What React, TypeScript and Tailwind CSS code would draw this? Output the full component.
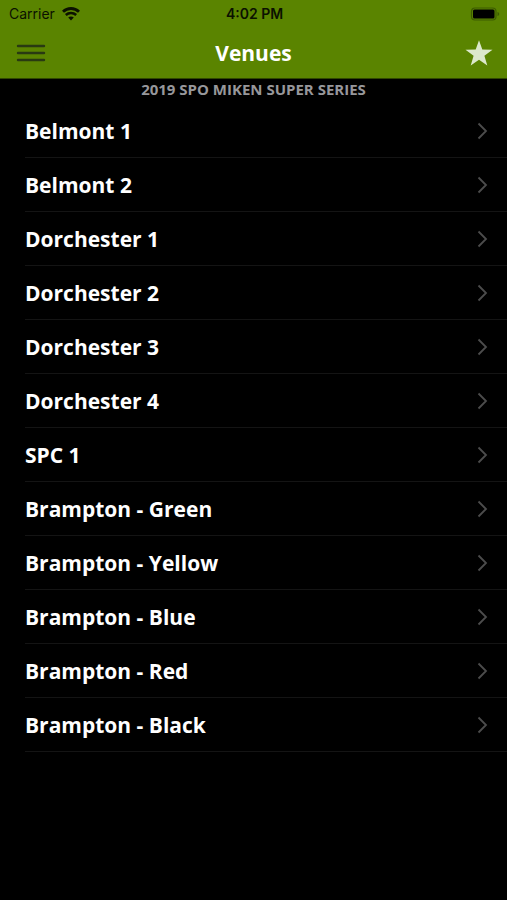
const venues = [
  'Belmont 1',
  'Belmont 2',
  'Dorchester 1',
  'Dorchester 2',
  'Dorchester 3',
  'Dorchester 4',
  'SPC 1',
  'Brampton - Green',
  'Brampton - Yellow',
  'Brampton - Blue',
  'Brampton - Red',
  'Brampton - Black',
]

function WifiIcon() {
  return (
    <svg viewBox="0 0 18 14" className="w-[18px] h-3.5" fill="none" aria-hidden="true">
      <path d="M1 4.800C5.500.4 12.500.4 17 4.800" stroke="#0b1100" strokeWidth="2.800" />
      <path d="M3.800 8c3-2.800 7.400-2.800 10.400 0" stroke="#0b1100" strokeWidth="2.500" />
      <path d="M6.200 10.600c1.600-1.500 4-1.500 5.600 0L9 13.600z" fill="#0b1100" />
    </svg>
  )
}

function BatteryIcon() {
  return (
    <svg viewBox="0 0 30 14" className="w-[30px] h-3.5" aria-hidden="true">
      <rect x="1.500" y="1" width="24.500" height="12" rx="3.500" fill="none" stroke="#3d5c00" strokeWidth="1.200" />
      <rect x="3" y="2.500" width="21.500" height="9" rx="1.500" fill="#000" />
      <path d="M27.500 5v4c1-.3 1.700-1.100 1.700-2s-.7-1.700-1.700-2z" fill="#3d5c00" />
    </svg>
  )
}

function StatusBar() {
  return (
    <div className="h-7 pl-[9px] pr-[7px] grid grid-cols-[1fr_auto_1fr] items-center text-[#0b1100] font-['Inter','Liberation_Sans',sans-serif]">
      <div className="flex items-center gap-[7px] text-sm">
        <span>Carrier</span>
        <WifiIcon />
      </div>
      <div className="text-sm font-semibold">4:02 PM</div>
      <div className="flex justify-end">
        <BatteryIcon />
      </div>
    </div>
  )
}

function NavBar() {
  return (
    <div className="h-[50px] px-3.5 grid grid-cols-[1fr_auto_1fr] items-center">
      <button type="button" aria-label="Menu" className="justify-self-start px-0.5">
        <svg viewBox="0 0 30 20" className="w-[30px] h-5" aria-hidden="true">
          <path d="M2 3h26M2 10h26M2 17h26" stroke="#293a12" strokeWidth="2.400" strokeLinecap="round" />
        </svg>
      </button>
      <h1 className="text-[21px] leading-7 font-bold text-white">Venues</h1>
      <button type="button" aria-label="Favorite" className="justify-self-end">
        <svg viewBox="0 0 28 27" className="w-7 h-[27px]" aria-hidden="true">
          <path
            d="M14 .3l3.300 9.300 10.200.2-8.100 6 2.900 9.700-8.300-5.800-8.300 5.800 2.900-9.700-8.100-6 10.200-.2z"
            fill="#dce8cb"
          />
        </svg>
      </button>
    </div>
  )
}

function VenueRow({ name }: { name: string }) {
  return (
    <li className="ml-[25px] border-b border-[#141414]">
      <button type="button" className="w-full h-[53px] pr-[18px] flex items-center justify-between text-left">
        <span className="text-[21px] leading-7 font-bold text-white">{name}</span>
        <svg viewBox="0 0 12 18" className="w-3 h-[18px]" fill="none" aria-hidden="true">
          <path d="M1.500 1.500L9 9l-7.500 7.500" stroke="#4c4c4c" strokeWidth="1.800" />
        </svg>
      </button>
    </li>
  )
}

export default function App() {
  return (
    <div className="min-h-screen bg-black font-['Open_Sans','Noto_Sans',sans-serif]">
      <header className="bg-[#5a8400] border-b border-[#304700]">
        <StatusBar />
        <NavBar />
      </header>
      <main>
        <h2 className="h-[25px] text-[15px] leading-5 font-bold text-center text-[#97979b]">
          2019 SPO MIKEN SUPER SERIES
        </h2>
        <ul>
          {venues.map((name) => (
            <VenueRow key={name} name={name} />
          ))}
        </ul>
      </main>
    </div>
  )
}
